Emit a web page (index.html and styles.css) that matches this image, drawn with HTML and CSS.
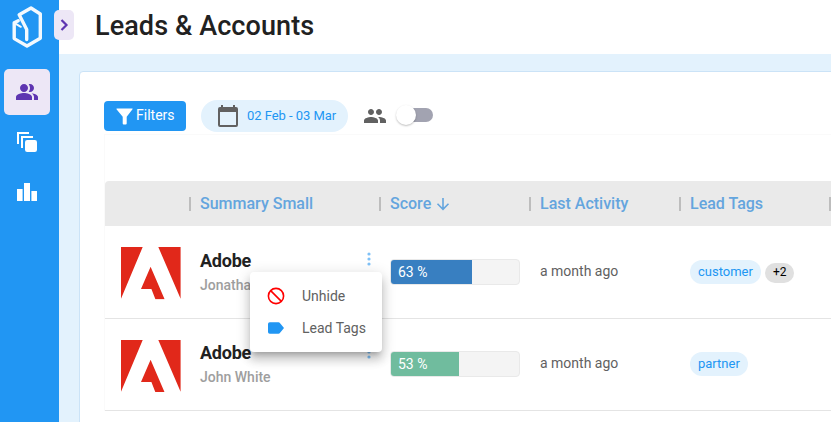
FILE: index.html
```html
<!DOCTYPE html>
<html lang="en">
<head>
<meta charset="utf-8">
<title>Leads &amp; Accounts</title>
<link rel="stylesheet" href="styles.css">
</head>
<body>
<svg width="0" height="0" class="defs">
  <symbol id="adobe" viewBox="0 0 60 52.5">
    <path fill="#e1281a" d="M0 0h21.7L0 51.8zM37.3 0h22.3v51.8zM29.6 19.8l14 32.5h-9.2l-4-10.3H20z"/>
  </symbol>
  <symbol id="dots" viewBox="0 0 4 14">
    <g fill="#7fc1f7"><circle cx="2" cy="2" r="1.6"/><circle cx="2" cy="7" r="1.6"/><circle cx="2" cy="12" r="1.6"/></g>
  </symbol>
</svg>
<div class="app">
  <nav class="sidebar">
    <svg class="logo" width="34" height="44" viewBox="0 0 34 44" fill="none" stroke="#fff" stroke-width="3.4" stroke-linejoin="round" stroke-linecap="round">
      <path d="M7.200 11.800 19 5 28.300 11V35.300L15 43 2.200 35.600V19.800l4-2M7.200 11.800l7.500 14.800v10"/>
      <path stroke-width="2" d="M2.200 19.800 8.800 23.800"/>
    </svg>
    <a class="nav-item active"><svg width="24" height="24" viewBox="0 0 24 24" fill="#5e35b1"><path d="M16.67 13.13C18.04 14.06 19 15.32 19 17v3h4v-3c0-2.18-3.57-3.47-6.33-3.87zM15 12c2.21 0 4-1.79 4-4s-1.79-4-4-4c-.47 0-.91.1-1.33.24C14.5 5.27 15 6.58 15 8s-.5 2.73-1.33 3.76c.42.14.86.24 1.33.24zM9 12c2.21 0 4-1.79 4-4s-1.79-4-4-4-4 1.79-4 4 1.79 4 4 4zm0 1c-2.67 0-8 1.34-8 4v3h16v-3c0-2.66-5.33-4-8-4z"/></svg></a>
    <a class="nav-item"><svg width="24" height="24" viewBox="0 0 24 24" fill="#fff"><path d="M2 2h12v2H4v10H2zM6 6h12v2H8v10H6z"/><rect x="10" y="10" width="12" height="12" rx="2.2"/></svg></a>
    <a class="nav-item"><svg width="24" height="24" viewBox="0 0 24 24" fill="#fff"><path d="M2 9h5.6v12H2zM9 3h6v18H9zM16.4 11H22v10h-5.6z"/></svg></a>
  </nav>
  <button class="expand" aria-label="Expand"><svg width="20" height="20" viewBox="0 0 20 20" fill="none" stroke="#5e35b1" stroke-width="2.2"><path d="M7.500 5l5 5-5 5"/></svg></button>
  <div class="main">
    <header class="header"><h1>Leads &amp; Accounts</h1></header>
    <main class="content">
      <section class="card">
        <div class="toolbar">
          <button class="filters"><svg width="17" height="17" viewBox="0 0 17 17" fill="#fff"><path d="M.9.500h15.300q.8 0 .3.800L10.700 8.800v6.700q0 1-1 1H7.700q-1 0-1-1V8.800L.5 1.300Q.1.500.9.500z"/></svg><span>Filters</span></button>
          <button class="dates"><svg width="22" height="24" viewBox="0 0 22 24"><path fill="#616161" d="M4 1h2v2h10V1h2v2h1q2 0 2 2v16q0 2-2 2H3q-2 0-2-2V5q0-2 2-2h1zM3 8v13h16V8z"/></svg><span>02 Feb - 03 Mar</span></button>
          <svg class="people" width="24" height="24" viewBox="0 0 24 24" fill="#616161"><path d="M16 11c1.66 0 2.99-1.34 2.99-3S17.66 5 16 5s-3 1.34-3 3 1.34 3 3 3zm-8 0c1.66 0 2.99-1.34 2.99-3S9.66 5 8 5 5 6.34 5 8s1.34 3 3 3zm0 2c-2.33 0-7 1.17-7 3.5V19h14v-2.5c0-2.33-4.67-3.5-7-3.5zm8 0c-.29 0-.62.02-.97.05 1.16.84 1.97 1.97 1.97 3.45V19h6v-2.5c0-2.33-4.67-3.5-7-3.5z"/></svg>
          <span class="switch"><i class="thumb"></i></span>
        </div>
        <div class="table-wrap">
          <div class="table">
            <div class="row head">
              <div class="cell"></div>
              <div class="cell">Summary Small</div>
              <div class="cell">Score<svg width="14" height="14" viewBox="0 0 14 14" fill="none" stroke="#64a5de" stroke-width="1.6"><path d="M7 1v11M1.5 6.8 7 12.3l5.500-5.500"/></svg></div>
              <div class="cell">Last Activity</div>
              <div class="cell">Lead Tags</div>
              <div class="cell"></div>
            </div>
            <div class="row">
              <div class="cell pic"><svg width="60" height="52.500"><use href="#adobe"/></svg></div>
              <div class="cell summary"><div><b>Adobe</b><small>Jonathan Reed</small></div><svg class="more" width="4" height="14"><use href="#dots"/></svg></div>
              <div class="cell"><div class="bar"><div class="fill blue" style="width:63%">63 %</div></div></div>
              <div class="cell"><span class="when">a month ago</span></div>
              <div class="cell"><span class="tag">customer</span><span class="count">+2</span></div>
              <div class="cell"></div>
            </div>
            <div class="row">
              <div class="cell pic"><svg width="60" height="52.500"><use href="#adobe"/></svg></div>
              <div class="cell summary"><div><b>Adobe</b><small>John White</small></div><svg class="more" width="4" height="14"><use href="#dots"/></svg></div>
              <div class="cell"><div class="bar"><div class="fill green" style="width:53%">53 %</div></div></div>
              <div class="cell"><span class="when">a month ago</span></div>
              <div class="cell"><span class="tag">partner</span></div>
              <div class="cell"></div>
            </div>
          </div>
        </div>
      </section>
    </main>
  </div>
  <div class="menu">
    <div class="item"><svg width="20" height="20" viewBox="0 0 20 20" fill="none" stroke="#f00" stroke-width="1.6"><circle cx="10" cy="10" r="7.600"/><path d="M4.600 4.600l10.800 10.800"/></svg><span>Unhide</span></div>
    <div class="item"><svg width="20" height="20" viewBox="0 0 20 20" fill="#2196f3"><path d="M3.700 4.200h8.800q.9 0 1.400.7L18 10l-4.100 5.100q-.5.700-1.400.7H3.700Q2 15.800 2 14.100V5.900Q2 4.200 3.700 4.200z"/></svg><span>Lead Tags</span></div>
  </div>
</div>
</body>
</html>
```
FILE: styles.css
```css
* { box-sizing: border-box; }
body { margin: 0; font-family: Roboto, "Liberation Sans", sans-serif; background: #fff; overflow: hidden; }
button { border: 0; padding: 0; margin: 0; font: inherit; }
svg { display: block; flex: none; }
.defs { position: absolute; }
.app { display: flex; position: relative; width: 831px; height: 422px; overflow: hidden; }

.sidebar { width: 59px; flex: none; background: #2196f3; padding: 2px 0 0 4px; }
.logo { display: block; margin: 1px 0 22px 8px; opacity: .95; overflow: visible; }
.nav-item { display: flex; align-items: center; justify-content: center; width: 46px; height: 46px; border-radius: 5px; margin-bottom: 4px; }
.nav-item.active { background: #ede7f6; }
.expand { position: absolute; left: 54px; top: 10px; width: 20px; height: 30px; border-radius: 5px; background: #ede7f6; display: flex; align-items: center; justify-content: center; }

.main { flex: 1; min-width: 0; display: flex; flex-direction: column; }
.header { height: 54px; flex: none; padding-left: 36px; display: flex; align-items: center; background: #fff; }
h1 { margin: -3px 0 0; font-size: 27px; font-weight: 500; letter-spacing: .09px; color: #212121; white-space: nowrap; }
.content { flex: 1; background: #e3f2fd; padding: 17px 0 0 20px; }
.card { width: 900px; height: 400px; background: #fff; border: 1px solid #cbe3f7; border-radius: 4px; padding: 28px 0 0 24px; }

.toolbar { display: flex; align-items: center; height: 32px; }
.filters { display: flex; align-items: center; width: 82px; height: 30px; border-radius: 4px; background: #2196f3; color: #fff; font-size: 14px; padding-left: 12px; gap: 3px; }
.filters span, .dates span { padding-bottom: 2px; }
.dates { display: flex; align-items: center; width: 147px; height: 32px; border-radius: 16px; background: #e3f2fd; color: #2196f3; font-size: 13px; margin-left: 15px; padding-left: 16px; gap: 8px; white-space: nowrap; }
.dates span { letter-spacing: -.04px; }
.people { margin-left: 15px; }
.switch { position: relative; width: 33px; height: 14px; margin: 0 0 2px 13px; border-radius: 7px; background: #a2a3b1; }
.thumb { position: absolute; left: -4px; top: -3px; width: 20px; height: 20px; border-radius: 50%; background: #fff; box-shadow: 0 1px 2px rgba(0,0,0,.25); }

.table-wrap { margin-top: 2px; border: 1px solid #fafafa; border-width: 1px 0 0 1px; padding-top: 46px; }
.row { display: grid; grid-template-columns: 85px 190px 150px 150px 150px 60px; height: 92px; border-bottom: 1px solid #e4e4e4; }
.row.head { height: 45px; background: #eaeaea; border: 0; border-radius: 4px 0 0 0; color: #64a5de; font-size: 16px; font-weight: 500; }
.head + .row { height: 93px; }
.cell { display: flex; align-items: center; height: 92px; padding-left: 10px; color: #616161; font-size: 14px; white-space: nowrap; }
.row:last-child .cell { height: 90px; }
.head .cell { height: 45px; color: inherit; font-size: inherit; position: relative; gap: 5px; }
.head .cell:not(:last-child)::after { content: ""; position: absolute; right: -1px; top: 16px; width: 2px; height: 14px; background: #bdbdbd; }
.cell.pic { padding: 3px 0 0 16px; }
.row:last-child .pic { padding-top: 4px; }
.summary { position: relative; }
.summary b, .summary small { display: block; }
.summary b { font-size: 18px; line-height: 22px; font-weight: 700; letter-spacing: -.25px; color: #212121; }
.summary small { font-size: 14px; line-height: 18px; font-weight: 500; color: #9e9e9e; margin: 4px 0 1px; }
.more { position: absolute; left: 177px; top: 26px; }
.bar { width: 130px; height: 26px; border: 1px solid #e9e9e9; border-radius: 4px; background: #f4f4f4; overflow: hidden; }
.fill { height: 24px; line-height: 25px; padding-left: 7px; color: #fff; font-size: 14px; }
.blue { background: #387fc1; }
.green { background: #70bc9e; }
.when { padding-bottom: 2px; }
.tag { height: 24px; line-height: 23px; padding: 0 8px; border-radius: 12px; background: #e3f2fd; color: #2196f3; font-size: 13px; }
.count { height: 20px; line-height: 19px; padding: 0 8px; margin: 2px 0 0 4px; border-radius: 10px; background: #e0e0e0; color: #000; font-size: 12px; }

.menu { position: absolute; left: 250px; top: 272px; width: 132px; height: 80px; padding: 8px 16px; background: #fff; border-radius: 4px; box-shadow: 0 5px 5px -3px rgba(0,0,0,.2), 0 8px 10px 1px rgba(0,0,0,.14), 0 3px 14px 2px rgba(0,0,0,.12); }
.item { display: flex; align-items: center; height: 32px; gap: 16px; font-size: 14px; color: #616161; white-space: nowrap; }
```
